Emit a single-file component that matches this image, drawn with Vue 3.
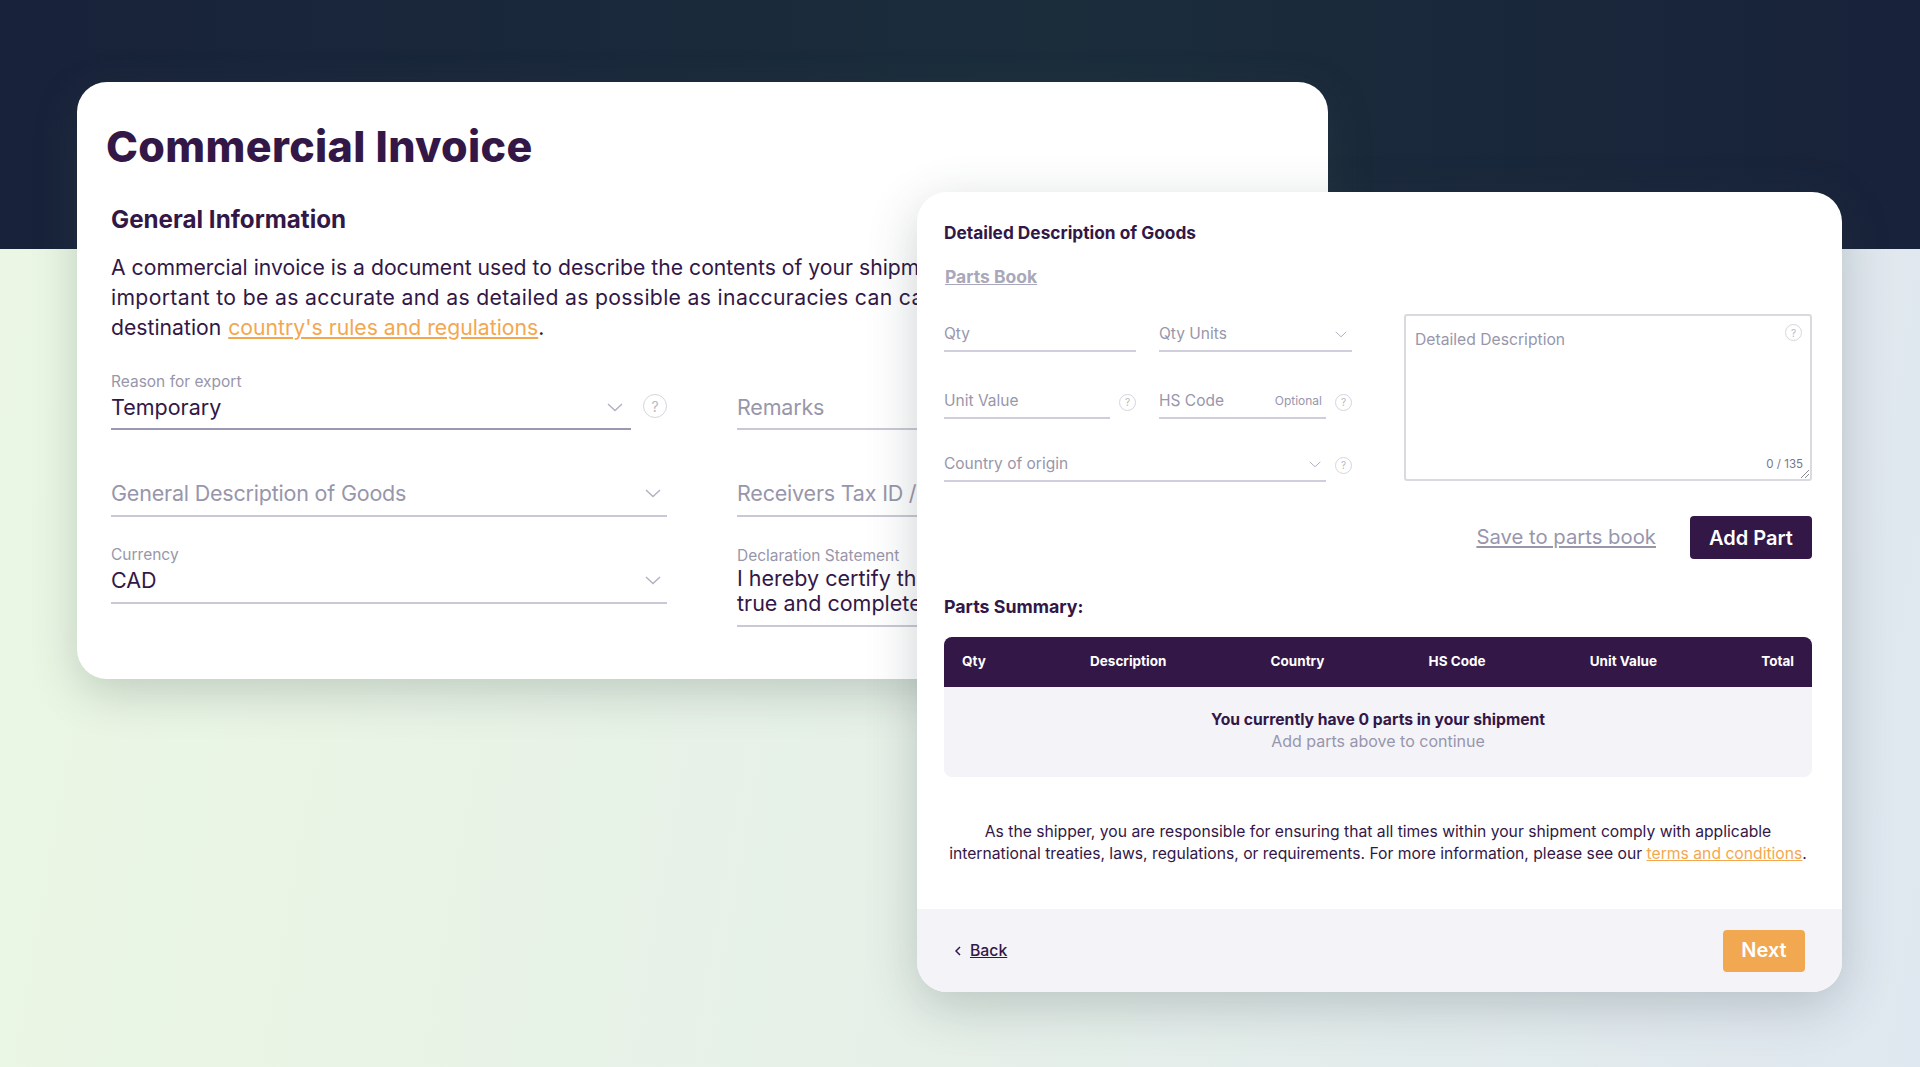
<template>
  <div class="page">
    <div class="band"></div>
    <div class="ground"></div>

    <section class="card back-card">
      <h1 class="title">Commercial Invoice</h1>
      <div class="intro">
        <h2 class="subtitle">General Information</h2>
        <p class="lead">
          <span>A commercial invoice is a document used to describe the contents of your shipment.</span>
          <span class="wide">important to be as accurate and as detailed as possible as inaccuracies can cause delays</span>
          <span>destination <a class="link">country's rules and regulations</a>.</span>
        </p>
      </div>
      <div class="back-grid">
        <div class="back-col">
          <div class="row-help">
            <div class="big-field filled">
              <label>Reason for export</label>
              <div class="big-value">Temporary
                <svg class="chev" viewBox="0 0 16 9"><path d="M1 1l7 6.5 7-6.5" /></svg>
              </div>
            </div>
            <span class="help big">?</span>
          </div>
          <div class="big-field empty">
            <div class="big-value muted">General Description of Goods
              <svg class="chev" viewBox="0 0 16 9"><path d="M1 1l7 6.5 7-6.5" /></svg>
            </div>
          </div>
          <div class="big-field currency">
            <label>Currency</label>
            <div class="big-value">CAD
              <svg class="chev" viewBox="0 0 16 9"><path d="M1 1l7 6.5 7-6.5" /></svg>
            </div>
          </div>
        </div>
        <div class="back-col right">
          <div class="big-field remarks">
            <div class="big-value muted">Remarks</div>
          </div>
          <div class="big-field empty">
            <div class="big-value muted">Receivers Tax ID / EIN</div>
          </div>
          <div class="big-field declaration">
            <label>Declaration Statement</label>
            <div class="decl-text">
              <span>I hereby certify that this invoice is</span>
              <span>true and complete</span>
            </div>
          </div>
        </div>
      </div>
    </section>

    <section class="card front-card">
      <div class="front-body">
        <h3 class="front-title">Detailed Description of Goods</h3>
        <a class="parts-book">Parts Book</a>

        <div class="form">
          <div class="form-left">
            <div class="form-row">
              <div class="small-field grow">Qty</div>
              <div class="small-field grow">Qty Units
                <svg class="chev small" viewBox="0 0 16 9"><path d="M1 1l7 6.5 7-6.5" /></svg>
              </div>
            </div>
            <div class="form-row second">
              <div class="with-help">
                <div class="small-field grow">Unit Value</div>
                <span class="help">?</span>
              </div>
              <div class="with-help">
                <div class="small-field grow">HS Code <em>Optional</em></div>
                <span class="help">?</span>
              </div>
            </div>
            <div class="with-help third">
              <div class="small-field grow">Country of origin
                <svg class="chev small" viewBox="0 0 16 9"><path d="M1 1l7 6.5 7-6.5" /></svg>
              </div>
              <span class="help">?</span>
            </div>
          </div>
          <div class="textarea">
            <div class="textarea-top">
              <span>Detailed Description</span>
              <span class="help">?</span>
            </div>
            <div class="counter">0 / 135</div>
            <svg class="grip" viewBox="0 0 10 10"><path d="M9 1L1 9M9 5L5 9" /></svg>
          </div>
        </div>

        <div class="actions">
          <a class="save-link">Save to parts book</a>
          <button class="btn add">Add Part</button>
        </div>

        <h3 class="summary-title">Parts Summary:</h3>
        <div class="table-head">
          <span v-for="col in columns" :key="col">{{ col }}</span>
        </div>
        <div class="table-empty">
          <strong>You currently have 0 parts in your shipment</strong>
          <span>Add parts above to continue</span>
        </div>

        <p class="notice">
          As the shipper, you are responsible for ensuring that all times within your shipment comply with applicable<br />
          international treaties, laws, regulations, or requirements. For more information, please see our
          <a class="link">terms and conditions</a>.
        </p>
      </div>

      <footer class="front-foot">
        <a class="back-link">
          <svg viewBox="0 0 6 10"><path d="M5 1L1 5l4 4" /></svg>
          <u>Back</u>
        </a>
        <button class="btn next">Next</button>
      </footer>
    </section>
  </div>
</template>

<script setup>
const columns = ['Qty', 'Description', 'Country', 'HS Code', 'Unit Value', 'Total']
</script>

<style>
html, body {
  margin: 0;
  background: #e6eeea;
}
</style>

<style scoped>
.page {
  position: relative;
  width: 1920px;
  height: 1067px;
  overflow: hidden;
  display: flex;
  flex-direction: column;
  font-family: Inter, 'Noto Sans', sans-serif;
  color: #321747;
}

.band {
  height: 249px;
  background: linear-gradient(90deg, #18223a 0%, #1b2d3b 55%, #18223a 100%);
}

.ground {
  flex: 1;
  background: linear-gradient(100deg, #ebf7e4 0%, #e6f0e8 50%, #dfe7f0 100%);
}

/* the two overlapping windows */
.card {
  position: absolute;
  background: #fff;
  border-radius: 30px;
}

.back-card {
  left: 77px;
  top: 82px;
  width: 1251px;
  height: 597px;
  box-sizing: border-box;
  padding: 39px 0 0 29px;
  overflow: hidden;
  box-shadow: 0 14px 45px rgba(60, 85, 75, 0.24);
}

.front-card {
  left: 917px;
  top: 192px;
  width: 925px;
  height: 800px;
  display: flex;
  flex-direction: column;
  overflow: hidden;
  box-shadow: 0 14px 50px rgba(50, 65, 70, 0.24);
}

.title {
  margin: 0;
  width: fit-content;
  font-size: 43px;
  line-height: 50px;
  font-weight: 800;
  letter-spacing: 0.35px;
}

.intro {
  padding-left: 5px;
}

.subtitle {
  margin: 34px 0 0;
  width: fit-content;
  font-size: 24.2px;
  line-height: 30px;
  font-weight: 700;
}

.lead {
  margin: 17px 0 0;
  font-size: 21.2px;
  line-height: 30px;
  font-weight: 400;
  white-space: nowrap;
}

.lead span {
  display: block;
}

.lead .wide {
  letter-spacing: 0.33px;
}

.lead .link {
  margin-left: 1px;
}

.link {
  color: #f2a850;
  text-decoration: underline;
}

.back-grid {
  display: flex;
  gap: 70px;
  padding-left: 5px;
  margin-top: 30px;
}

.back-col {
  width: 556px;
  flex: none;
  display: flex;
  flex-direction: column;
}

.back-col.right {
  width: 600px;
}

.row-help {
  display: flex;
  align-items: center;
  gap: 12px;
}

.row-help .big-field {
  flex: 1;
}

.big-field label {
  display: block;
  font-size: 15.5px;
  line-height: 20px;
  color: #9896ab;
}

.big-value {
  display: flex;
  align-items: center;
  justify-content: space-between;
  font-size: 21.5px;
  line-height: 30px;
  padding: 0 6px 7px 0;
  border-bottom: 2px solid #c9c8d6;
  white-space: nowrap;
}

.filled .big-value {
  border-bottom-color: #9a98b2;
  padding-right: 8px;
  padding-bottom: 6px;
}

.remarks .big-value {
  padding-bottom: 6px;
}

.muted {
  color: #9896ab;
  letter-spacing: -0.2px;
}

.empty {
  margin-top: 48px;
}

.currency {
  margin-top: 28px;
}

.remarks {
  margin-top: 20px;
}

.declaration {
  margin-top: 29px;
}

.decl-text {
  font-size: 21.5px;
  line-height: 25px;
  padding-bottom: 9px;
  border-bottom: 2px solid #c9c8d6;
  white-space: nowrap;
}

.decl-text span {
  display: block;
}

.chev {
  width: 16px;
  height: 9px;
  flex: none;
}

.chev.small {
  width: 12px;
  height: 7px;
}

.chev path {
  fill: none;
  stroke: #b0afc0;
  stroke-width: 1.3;
}

.help {
  width: 17px;
  height: 17px;
  flex: none;
  box-sizing: border-box;
  border: 1.5px solid #d6d6dc;
  border-radius: 50%;
  display: inline-flex;
  align-items: center;
  justify-content: center;
  font-size: 10px;
  color: #b8b8c2;
}

.help.big {
  width: 24px;
  height: 24px;
  font-size: 14px;
  margin-top: 10px;
}

.front-body {
  flex: 1;
  padding: 31px 30px 0 27px;
}

.front-title {
  margin: 0;
  font-size: 17.3px;
  line-height: 20px;
  font-weight: 700;
}

.parts-book {
  display: block;
  width: fit-content;
  margin: 24px 0 0 1px;
  font-size: 17.5px;
  line-height: 20px;
  font-weight: 700;
  color: #a9a8ba;
  text-decoration: underline;
}

.form {
  display: flex;
  margin-top: 27px;
  gap: 52px;
}

.form-left {
  width: 408px;
  flex: none;
}

.form-row {
  display: grid;
  grid-template-columns: 192px 193px;
  gap: 23px;
  padding-top: 8px;
}

.form-row.second {
  padding-top: 37px;
}

.with-help {
  display: flex;
  align-items: center;
  gap: 9px;
}

.with-help .help {
  margin-top: -4px;
}

.third {
  width: 408px;
  margin-top: 33px;
}

.small-field {
  display: flex;
  align-items: center;
  justify-content: space-between;
  font-size: 15.5px;
  line-height: 24px;
  height: 30px;
  box-sizing: border-box;
  padding: 0 0 4px;
  border-bottom: 2px solid #cfcedc;
  color: #9896ab;
}

.small-field .chev {
  margin-right: 5px;
}

.small-field em {
  font-style: normal;
  font-size: 12px;
  margin-right: 4px;
}

.grow {
  flex: 1;
}

.textarea {
  position: relative;
  flex: 1;
  height: 167px;
  box-sizing: border-box;
  border: 2px solid #d9d9df;
  border-radius: 3px;
  padding: 8px 8px 0 9px;
  font-size: 15.7px;
  color: #9896ab;
}

.textarea-top {
  display: flex;
  justify-content: space-between;
  align-items: flex-start;
}

.textarea-top span:first-child {
  margin-top: 6px;
}

.counter {
  position: absolute;
  right: 7px;
  bottom: 8px;
  font-size: 11.5px;
  color: #77768a;
}

.grip {
  position: absolute;
  right: 0;
  bottom: 0;
  width: 10px;
  height: 10px;
}

.grip path {
  fill: none;
  stroke: #8b8b95;
  stroke-width: 1;
}

.actions {
  display: flex;
  justify-content: flex-end;
  align-items: center;
  gap: 34px;
  margin-top: 34px;
}

.save-link {
  font-size: 20.3px;
  color: #9896ab;
  text-decoration: underline;
  margin-top: -3px;
}

.btn {
  border: none;
  border-radius: 4px;
  color: #fff;
  font-family: inherit;
  font-size: 20px;
  font-weight: 600;
}

.add {
  width: 122px;
  height: 43px;
  background: #321747;
}

.summary-title {
  margin: 38px 0 0;
  font-size: 17.8px;
  line-height: 20px;
  font-weight: 700;
}

.table-head {
  display: flex;
  justify-content: space-between;
  align-items: center;
  margin-top: 20px;
  height: 50px;
  box-sizing: border-box;
  padding: 0 18px 3px;
  background: #321747;
  border-radius: 8px 8px 0 0;
  color: #fff;
  font-size: 13.5px;
  font-weight: 700;
}

.table-empty {
  display: flex;
  flex-direction: column;
  align-items: center;
  height: 90px;
  box-sizing: border-box;
  padding-top: 22px;
  background: #f3f3f8;
  border-radius: 0 0 8px 8px;
  font-size: 15.7px;
  line-height: 21.5px;
}

.table-empty span {
  color: #9896ab;
  font-size: 16px;
}

.notice {
  margin: 44px 0 0;
  font-size: 15.7px;
  line-height: 22px;
  text-align: center;
}

.front-foot {
  height: 83px;
  flex: none;
  display: flex;
  align-items: center;
  justify-content: space-between;
  padding: 0 37px 0 38px;
  background: #f3f3f8;
}

.back-link {
  display: flex;
  align-items: center;
  gap: 9px;
  font-size: 15.8px;
  font-weight: 500;
}

.back-link svg {
  width: 6px;
  height: 10px;
}

.back-link path {
  fill: none;
  stroke: #321747;
  stroke-width: 1.5;
}

.next {
  width: 82px;
  height: 42px;
  padding-bottom: 3px;
  background: #f2a850;
}
</style>
